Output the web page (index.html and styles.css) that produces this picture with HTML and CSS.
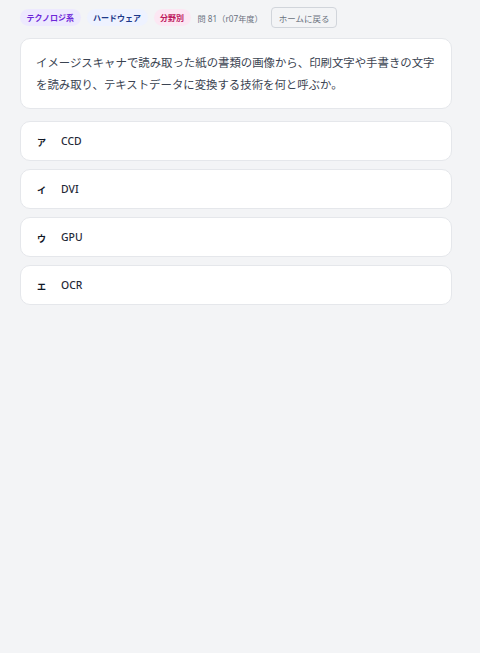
FILE: index.html
```html
<!DOCTYPE html>
<html lang="ja">
<head>
<meta charset="utf-8">
<title>問題</title>
<link rel="stylesheet" href="styles.css">
</head>
<body>
<div class="page">
  <div class="meta">
    <span class="badge badge-tech">テクノロジ系</span>
    <span class="badge badge-hard">ハードウェア</span>
    <span class="badge badge-field">分野別</span>
    <span class="qno">問 81（r07年度）</span>
    <button class="home">ホームに戻る</button>
  </div>
  <div class="question">イメージスキャナで読み取った紙の書類の画像から、印刷文字や手書きの文字を読み取り、テキストデータに変換する技術を何と呼ぶか。</div>
  <ul class="options">
    <li class="option"><span class="label">ア</span><span class="text">CCD</span></li>
    <li class="option"><span class="label">イ</span><span class="text">DVI</span></li>
    <li class="option"><span class="label">ウ</span><span class="text">GPU</span></li>
    <li class="option"><span class="label">エ</span><span class="text">OCR</span></li>
  </ul>
</div>
</body>
</html>
```

FILE: styles.css
```css
html, body {
  margin: 0;
  padding: 0;
  background: #f3f4f6;
  font-family: "Noto Sans", "Noto Sans CJK JP", sans-serif;
}
.page {
  width: 432px;
  padding: 7px 0 0 20px;
}
.meta {
  display: flex;
  align-items: center;
  gap: 6px;
  height: 21px;
}
.badge {
  font-size: 8px;
  font-weight: 700;
  line-height: 17px;
  height: 17px;
  padding: 0 6.5px;
  border-radius: 9px;
}
.badge-tech { background: #ede9fe; color: #6d28d9; }
.badge-hard { background: #eef2ff; color: #1e3a8a; }
.badge-field { background: #fce7f3; color: #be185d; }
.qno {
  font-size: 8.2px;
  color: #6b7280;
  margin-left: 1px;
}
.home {
  margin-left: 2px;
  height: 21px;
  padding: 0 7px;
  font-family: inherit;
  font-size: 8.5px;
  color: #6b7280;
  background: #f3f4f6;
  border: 1px solid #d1d5db;
  border-radius: 4px;
}
.question {
  margin-top: 10px;
  background: #fff;
  border: 1px solid #e5e7eb;
  border-radius: 10px;
  padding: 13px 15px 12px 15px;
  font-size: 11.4px;
  line-height: 22px;
  color: #3b4452;
}
.options {
  list-style: none;
  margin: 12px 0 0;
  padding: 0;
  display: flex;
  flex-direction: column;
  gap: 8px;
}
.option {
  display: flex;
  align-items: center;
  height: 38px;
  background: #fff;
  border: 1px solid #e5e7eb;
  border-radius: 10px;
  padding: 0 16px;
}
.label {
  width: 16px;
  margin-right: 8px;
  font-size: 9px;
  font-weight: 700;
  color: #111827;
  padding-top: 2px;
}
.text {
  font-size: 10.4px;
  font-weight: 500;
  color: #1f2937;
}
```
